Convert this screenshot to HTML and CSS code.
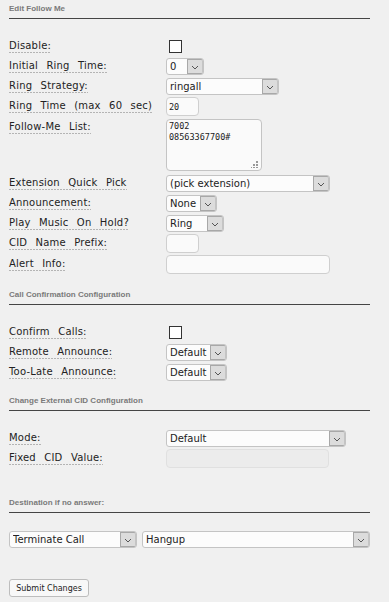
FILE: index.html
```html
<!DOCTYPE html>
<html>
<head>
    <title>Follow Me</title>
    <link rel="stylesheet" href="styles.css">
</head>
<body>
<form class="fm">
    <h5 class="section">Edit Follow Me</h5>

    <div class="row"><a class="info">Disable:</a><input type="checkbox" class="check"></div>
    <div class="row"><a class="info">Initial Ring Time:</a>
        <span class="sel w-time"><select><option>0</option></select><span class="arrow"><svg width="14" height="13" viewBox="0 0 14 13"><path d="M4 6l3 3 3-3" fill="none" stroke="#555" stroke-width="1"/></svg></span></span>
    </div>
    <div class="row"><a class="info">Ring Strategy:</a>
        <span class="sel w-strategy"><select><option>ringall</option></select><span class="arrow"><svg width="14" height="13" viewBox="0 0 14 13"><path d="M4 6l3 3 3-3" fill="none" stroke="#555" stroke-width="1"/></svg></span></span>
    </div>
    <div class="row"><a class="info">Ring Time (max 60 sec)</a><input type="text" class="txt w-small" value="20"></div>
    <div class="row top"><a class="info">Follow-Me List:</a>
        <span class="area"><textarea rows="4">7002
08563367700#</textarea><span class="grip"><svg width="8" height="8" viewBox="0 0 8 8" fill="#999"><rect x="5" y="1" width="2" height="2"/><rect x="2" y="4" width="2" height="2"/><rect x="5" y="4" width="2" height="2"/><rect x="-1" y="7" width="2" height="2"/><rect x="2" y="7" width="2" height="2"/><rect x="5" y="7" width="2" height="2"/></svg></span></span>
    </div>
    <div class="row"><a class="info">Extension Quick Pick</a>
        <span class="sel w-wide"><select><option>(pick extension)</option></select><span class="arrow"><svg width="14" height="13" viewBox="0 0 14 13"><path d="M4 6l3 3 3-3" fill="none" stroke="#555" stroke-width="1"/></svg></span></span>
    </div>
    <div class="row"><a class="info">Announcement:</a>
        <span class="sel w-none"><select><option>None</option></select><span class="arrow"><svg width="14" height="13" viewBox="0 0 14 13"><path d="M4 6l3 3 3-3" fill="none" stroke="#555" stroke-width="1"/></svg></span></span>
    </div>
    <div class="row"><a class="info">Play Music On Hold?</a>
        <span class="sel w-ring"><select><option>Ring</option></select><span class="arrow"><svg width="14" height="13" viewBox="0 0 14 13"><path d="M4 6l3 3 3-3" fill="none" stroke="#555" stroke-width="1"/></svg></span></span>
    </div>
    <div class="row"><a class="info">CID Name Prefix:</a><input type="text" class="txt w-small"></div>
    <div class="row"><a class="info">Alert Info:</a><input type="text" class="txt w-wide"></div>

    <h5 class="section">Call Confirmation Configuration</h5>

    <div class="row"><a class="info">Confirm Calls:</a><input type="checkbox" class="check"></div>
    <div class="row"><a class="info">Remote Announce:</a>
        <span class="sel w-default"><select><option>Default</option></select><span class="arrow"><svg width="14" height="13" viewBox="0 0 14 13"><path d="M4 6l3 3 3-3" fill="none" stroke="#555" stroke-width="1"/></svg></span></span>
    </div>
    <div class="row"><a class="info">Too-Late Announce:</a>
        <span class="sel w-default"><select><option>Default</option></select><span class="arrow"><svg width="14" height="13" viewBox="0 0 14 13"><path d="M4 6l3 3 3-3" fill="none" stroke="#555" stroke-width="1"/></svg></span></span>
    </div>

    <h5 class="section tight">Change External CID Configuration</h5>

    <div class="row"><a class="info">Mode:</a>
        <span class="sel w-mode"><select><option>Default</option></select><span class="arrow"><svg width="14" height="13" viewBox="0 0 14 13"><path d="M4 6l3 3 3-3" fill="none" stroke="#555" stroke-width="1"/></svg></span></span>
    </div>
    <div class="row"><a class="info">Fixed CID Value:</a><input type="text" class="txt w-fixed" disabled></div>

    <h5 class="section spaced">Destination if no answer:</h5>

    <div class="dest">
        <span class="sel w-goto"><select><option>Terminate Call</option></select><span class="arrow"><svg width="14" height="13" viewBox="0 0 14 13"><path d="M4 6l3 3 3-3" fill="none" stroke="#555" stroke-width="1"/></svg></span></span>
        <span class="sel w-hangup"><select><option>Hangup</option></select><span class="arrow"><svg width="14" height="13" viewBox="0 0 14 13"><path d="M4 6l3 3 3-3" fill="none" stroke="#555" stroke-width="1"/></svg></span></span>
    </div>

    <button type="button" class="submit">Submit Changes</button>
</form>
</body>
</html>
```

FILE: styles.css
```css
body {
    margin: 0;
    padding: 0;
    background-color: #f0f0f0;
    font-family: "DejaVu Sans", Verdana, sans-serif;
    font-size: 10px;
    color: #222;
}

.fm {
    width: 361px;
    padding: 4px 0 0 9px;
}

/* section headings with the dark rule under them */
.section {
    margin: 15px 0 17px 0;
    padding-bottom: 4px;
    font-family: "Liberation Sans", Arial, sans-serif;
    font-size: 8px;
    line-height: 10px;
    font-weight: bold;
    color: #7a7a7a;
    border-bottom: 1px solid #454545;
}

.section:first-child {
    margin-top: 0;
}

.section.tight {
    margin-top: 14px;
}

.section.spaced {
    margin-top: 29px;
}

/* label column + field column */
.row {
    display: grid;
    grid-template-columns: 157px auto;
    justify-content: start;
    align-items: center;
    min-height: 20px;
}

.row.top {
    align-items: start;
}

.info {
    justify-self: start;
    font-size: 10px;
    line-height: 12px;
    letter-spacing: 0.2px;
    word-spacing: 5px;
    padding-bottom: 1px;
    background: repeating-linear-gradient(to right, #b4b4b4 0 2px, transparent 2px 3px) left bottom / 100% 1px no-repeat;
}

.row.top .info {
    margin-top: 4px;
}

.check {
    appearance: none;
    width: 13px;
    height: 13px;
    margin: 0 0 0 3px;
    border: 1px solid #333;
    background: #fff;
}

/* selects with the grey arrow box */
.sel {
    position: relative;
    display: inline-flex;
    height: 17px;
    margin: 1px 0;
}

.sel select {
    appearance: none;
    width: 100%;
    height: 17px;
    margin: 0;
    padding: 0 18px 0 3px;
    border: 1px solid #c4c4c4;
    border-radius: 3px;
    background: #fcfcfc;
    font-family: "DejaVu Sans", Verdana, sans-serif;
    font-size: 10px;
    color: #222;
    box-sizing: border-box;
}

.sel .arrow {
    position: absolute;
    top: 1px;
    right: 1px;
    bottom: 1px;
    width: 16px;
    display: flex;
    align-items: center;
    justify-content: center;
    background: #dcdcdc;
    border: 1px solid #a8a8a8;
    border-right-color: #c4c4c4;
    box-sizing: border-box;
    border-radius: 0 2px 2px 0;
}

.w-time { width: 38px; }
.w-strategy { width: 113px; }
.w-wide { width: 164px; }
.w-none { width: 51px; }
.w-ring { width: 58px; }
.w-default { width: 61px; }
.w-mode { width: 180px; }
.w-goto { width: 128px; }
.w-hangup { width: 228px; }

.txt {
    height: 19px;
    margin: 1px 0;
    padding: 0 2px;
    border: 1px solid #cfcfcf;
    border-radius: 4px;
    background: #fafafa;
    font-family: "DejaVu Sans Mono", monospace;
    font-size: 8.5px;
    color: #222;
    box-sizing: border-box;
}

.txt:disabled {
    background: #ececec;
    border-color: #e0e0e0;
}

.w-small { width: 33px; }
.w-fixed { width: 163px; }

.area {
    position: relative;
    display: block;
    margin: 2px 0;
}

.area textarea {
    display: block;
    width: 96px;
    height: 52px;
    margin: 0;
    padding: 1px 2px;
    border: 1px solid #c4c4c4;
    border-radius: 4px;
    background: #fafafa;
    font-family: "DejaVu Sans Mono", monospace;
    font-size: 8.5px;
    line-height: 11px;
    color: #222;
    resize: none;
    box-sizing: border-box;
}

.grip {
    position: absolute;
    right: 3px;
    bottom: 3px;
    width: 8px;
    height: 8px;
}

.grip svg {
    display: block;
}

.dest {
    display: flex;
    gap: 5px;
}

.submit {
    display: block;
    margin-top: 30px;
    width: 80px;
    height: 18px;
    padding: 0;
    border: 1px solid #bdbdbd;
    border-radius: 3px;
    background: #f8f8f8;
    font-family: "DejaVu Sans", Verdana, sans-serif;
    font-size: 8px;
    color: #222;
}
```
